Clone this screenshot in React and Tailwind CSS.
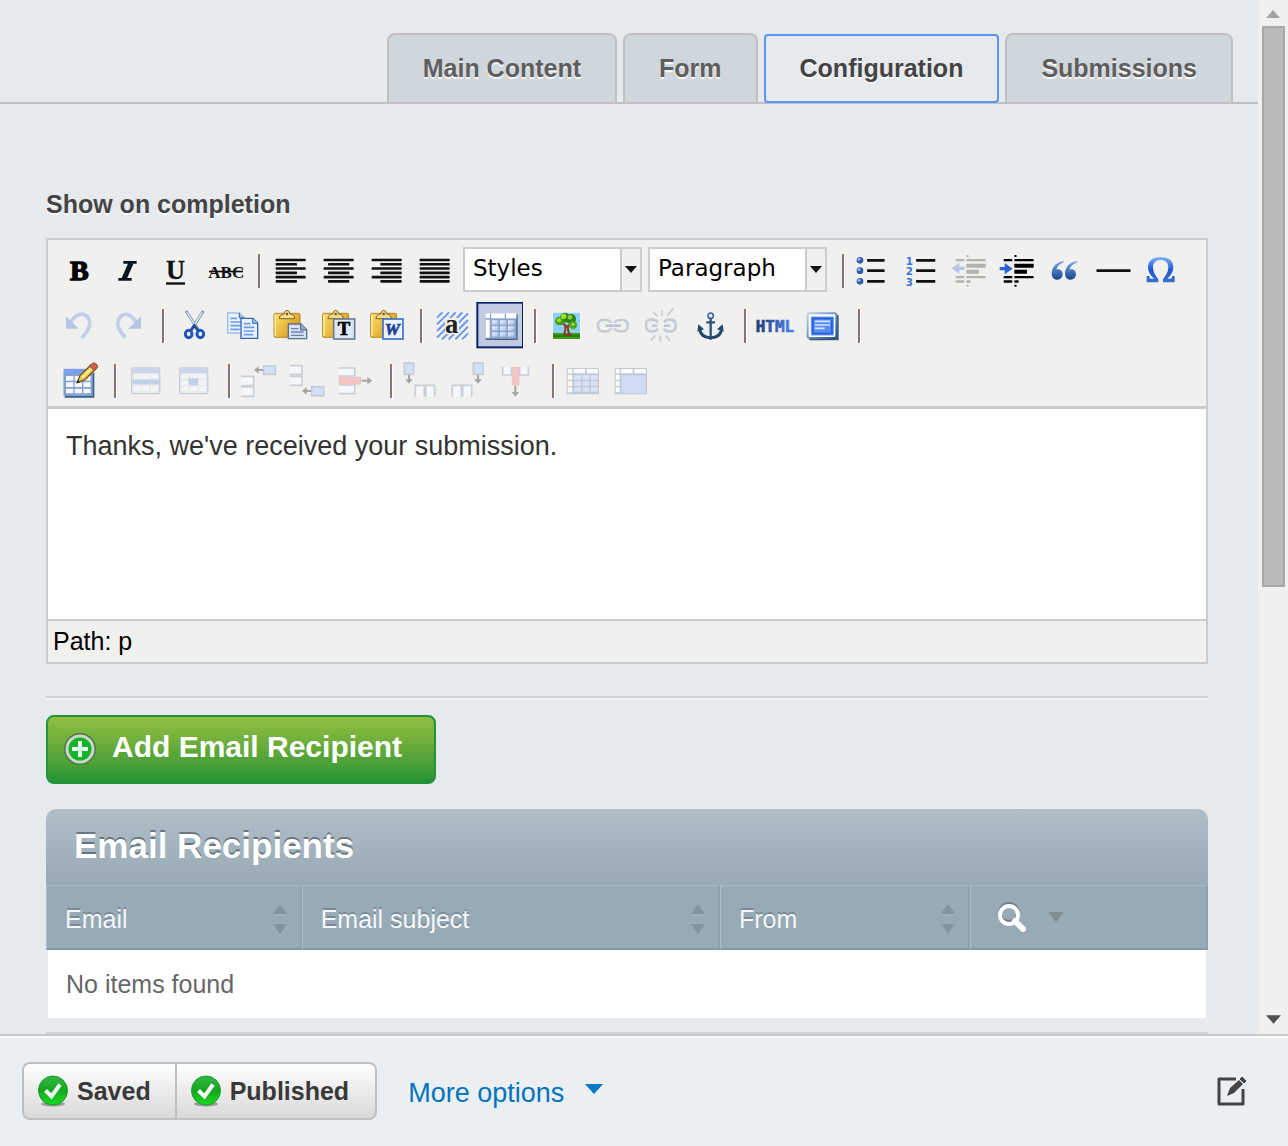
import React from "react";

const hint = "[text-shadow:0_2px_1px_rgba(255,255,255,0.85)]";

function Tool({ label, view, active, disabled, children }) {
  return (
    <button
      type="button"
      aria-label={label}
      title={label}
      disabled={disabled}
      className="flex h-12 w-12 shrink-0 items-center justify-center"
    >
      <svg viewBox={view} className="h-12 w-12" fill="none">
        {active && <rect x="82" y="203" width="137" height="134" fill="#c2cbe0" stroke="#0a246a" strokeWidth="6" />}
        {children}
      </svg>
    </button>
  );
}

function Sep() {
  return (
    <span className="flex h-12 w-[18px] shrink-0 items-center justify-end pr-[5px]">
      <span className="h-[34px] w-[2px] bg-[repeating-linear-gradient(#8f7773_0_5px,#75758c_5px_8px)] shadow-[1px_1px_1px_#fff]" />
    </span>
  );
}

function Picker({ label, value }) {
  return (
    <span className="relative h-[45px] w-[179px] shrink-0">
      <select
        aria-label={label}
        defaultValue={value}
        className="h-full w-full appearance-none border-2 border-[#ccc] bg-white pb-[2px] pl-2 font-['DejaVu_Sans',sans-serif] text-[23px] leading-[38px] text-black outline-none"
      >
        <option>{value}</option>
      </select>
      <span className="pointer-events-none absolute inset-y-[2px] right-[2px] flex w-[20px] items-center justify-center border-l-2 border-[#ccc] bg-[#f0f0ee]">
        <svg viewBox="0 0 12 7" className="h-[7px] w-3">
          <path d="M0 0h12L6 7z" fill="#111" />
        </svg>
      </span>
    </span>
  );
}

function Bars({ rows, color = "#111", h = 7 }) {
  return rows.map(([x, y, w], i) => <rect key={i} x={x} y={y} width={w} height={h} rx="2" fill={color} />);
}

function Clipboard({ x }) {
  return (
    <g transform={`translate(${x} 0)`}>
      <rect x="2" y="235" width="78" height="72" rx="4" fill="url(#board)" stroke="#b08a2c" strokeWidth="3" />
      <path d="M6 240v62" stroke="#fff0a8" strokeWidth="4" />
      <path d="M18 251q0-12 14-14 2-11 9-11t9 11q14 2 14 14z" fill="#f3dc86" stroke="#80662a" strokeWidth="3" />
      <circle cx="41" cy="237" r="4" fill="#6e5a2a" />
    </g>
  );
}

function Grid({ x, y, w, h, faded, children }) {
  return (
    <g opacity={faded ? 0.35 : 1}>
      <rect x={x} y={y} width={w} height={h} rx="3" fill="#dbe6fa" stroke="#8095b5" strokeWidth="4" />
      <rect x={x + 2} y={y + 2} width={w - 4} height="14" fill="#86a5e3" />
      {children}
    </g>
  );
}

const cells = (x, y, cols, rows, w, h, gx, gy, fill) => {
  const out = [];
  for (let r = 0; r < rows; r++)
    for (let c = 0; c < cols; c++)
      out.push(<rect key={r + "-" + c} x={x + c * gx} y={y + r * gy} width={w} height={h} rx="1" fill={fill} />);
  return out;
};

function Defs() {
  return (
    <svg className="absolute h-0 w-0" aria-hidden="true">
      <defs>
        <linearGradient id="board" x1="0" y1="0" x2="1" y2="0.6">
          <stop offset="0" stopColor="#ffdf6b" />
          <stop offset="1" stopColor="#d49a1c" />
        </linearGradient>
        <linearGradient id="blue" x1="0" y1="0" x2="0" y2="1">
          <stop offset="0" stopColor="#6fa8e8" />
          <stop offset="1" stopColor="#1f4690" />
        </linearGradient>
        <linearGradient id="omega" x1="0" y1="0" x2="0" y2="1">
          <stop offset="0" stopColor="#7fb2f7" />
          <stop offset="0.5" stopColor="#1e57d0" />
          <stop offset="1" stopColor="#3a6fd8" />
        </linearGradient>
        <linearGradient id="html" x1="0" y1="0" x2="1" y2="0">
          <stop offset="0" stopColor="#1c3c78" />
          <stop offset="1" stopColor="#4a86f0" />
        </linearGradient>
        <linearGradient id="cell" x1="0" y1="0" x2="1" y2="1">
          <stop offset="0" stopColor="#f4f8ff" />
          <stop offset="1" stopColor="#9db8ee" />
        </linearGradient>
        <linearGradient id="tick" x1="0" y1="0" x2="0" y2="1">
          <stop offset="0" stopColor="#2fb944" />
          <stop offset="0.5" stopColor="#17a51f" />
          <stop offset="1" stopColor="#14e01c" />
        </linearGradient>
        <linearGradient id="edge" x1="0" y1="0" x2="1" y2="1">
          <stop offset="0" stopColor="#b9d3ee" />
          <stop offset="1" stopColor="#24508a" />
        </linearGradient>
      </defs>
    </svg>
  );
}

const serif = "Liberation Serif, serif";

function AlignTool({ label, x, kind }) {
  const rows = [0, 1, 2, 3, 4, 5].map((i) => {
    const y = 71 + i * 12.8;
    const short = i % 2 === 1 && kind !== "justify";
    const left = x + 32;
    if (!short) return [left, y, 90];
    return [kind === "left" ? left : kind === "center" ? left + 13 : left + 26, y, 64];
  });
  return (
    <Tool label={label} view={`${x} 36 144 144`}>
      <Bars rows={rows} h={8} />
    </Tool>
  );
}

function DentBars({ x, color }) {
  return (
    <g fill={color}>
      <rect x={x + 4} y="60" width="7" height="6" rx="2" />
      <rect x={x - 28} y="72" width="26" height="7" rx="2" />
      <rect x={x + 4} y="72" width="58" height="7" rx="2" />
      <rect x={x + 4} y="86" width="58" height="12" rx="2" />
      <rect x={x + 4} y="104" width="38" height="12" rx="2" />
      <rect x={x - 28} y="123" width="26" height="7" rx="2" />
      <rect x={x + 4} y="123" width="58" height="7" rx="2" />
      <rect x={x - 28} y="136" width="26" height="7" rx="2" />
      <rect x={x + 4} y="136" width="13" height="7" rx="2" />
      <rect x={x + 4} y="149" width="7" height="6" rx="2" />
    </g>
  );
}

function RowOne() {
  return (
    <div className="flex h-[50px] items-center">
      <Tool label="Bold" view="45 36 144 144">
        <text x="90" y="135" fontFamily={serif} fontWeight="700" fontSize="84" fill="#000" stroke="#000" strokeWidth="4">B</text>
      </Tool>
      <Tool label="Italic" view="189 36 144 144">
        <path d="M250 82h40M235 133h40M274 82l-22 51" stroke="#0c1420" strokeWidth="8" />
        <path d="M273 84l-21 48" stroke="#0c1420" strokeWidth="15" />
      </Tool>
      <Tool label="Underline" view="333 36 144 144">
        <text x="378" y="132" fontFamily={serif} fontWeight="700" fontSize="79" fill="#111" stroke="#111" strokeWidth="1">U</text>
        <rect x="378" y="142" width="57" height="7" fill="#111" />
      </Tool>
      <Tool label="Strikethrough" view="477 36 144 144">
        <text x="505" y="128" fontFamily={serif} fontWeight="700" fontSize="51" fill="#111">ABC</text>
        <rect x="507" y="107" width="102" height="5" fill="#111" />
      </Tool>
      <Sep />
      <AlignTool label="Align left" x={675} kind="left" />
      <AlignTool label="Align center" x={819} kind="center" />
      <AlignTool label="Align right" x={963} kind="right" />
      <AlignTool label="Align full" x={1107} kind="justify" />
      <div className="mr-1 mb-1 ml-[6px] flex gap-[6px]">
        <Picker label="Styles" value="Styles" />
        <Picker label="Format" value="Paragraph" />
      </div>
      <Sep />
      <Tool label="Unordered list" view="57 36 144 144">
        {[76, 107, 139].map((y) => (
          <g key={y}>
            <circle cx="90" cy={y} r="10" fill="#2d5cab" />
            <circle cx="87" cy={y - 3} r="4" fill="#a4c2ee" />
            <rect x="111" y={y - 4} width="53" height="8" rx="2" fill="#111" />
          </g>
        ))}
      </Tool>
      <Tool label="Ordered list" view="201 36 144 144">
        {[76, 107, 139].map((y, i) => (
          <g key={y}>
            <text x="227" y={y + 13} fontFamily="DejaVu Sans, sans-serif" fontWeight="700" fontSize="31" fill="#3f73dc">{i + 1}</text>
            <rect x="258" y={y - 4} width="58" height="8" rx="2" fill="#111" />
          </g>
        ))}
      </Tool>
      <Tool label="Outdent" view="345 36 144 144" disabled>
        <DentBars x={405} color="#b2b2b0" />
        <path d="M364 100l24-16v11h16v10h-16v11z" fill="#b5c5ea" />
      </Tool>
      <Tool label="Indent" view="489 36 144 144">
        <DentBars x={549} color="#000" />
        <path d="M548 101l-24-17v12h-15v10h15v12z" fill="#2b62d3" />
      </Tool>
      <Tool label="Blockquote" view="633 36 144 144">
        {[0, 40].map((dx) => (
          <path
            key={dx}
            transform={`translate(${dx} 0)`}
            d="M700 78c-22 4-35 19-35 38 0 11 7 18 17 18 9 0 16-7 16-16s-6-15-14-15c-2 0-4 0-5 1 2-10 9-17 22-22z"
            fill="url(#blue)"
          />
        ))}
      </Tool>
      <Tool label="Horizontal rule" view="777 36 144 144">
        <rect x="799" y="103" width="103" height="8" rx="3" fill="#111" />
      </Tool>
      <Tool label="Special character" view="921 36 144 144">
        <path
          d="M950 142v-19h7l3 8h12c-13-12-18-23-18-35 0-19 16-30 38-30s38 11 38 30c0 12-5 23-18 35h12l3-8h7v19h-35v-9c11-14 16-24 16-36 0-14-8-22-23-22s-23 8-23 22c0 12 5 22 16 36v9z"
          fill="url(#omega)"
        />
      </Tool>
    </div>
  );
}

function RowTwo() {
  return (
    <div className="flex h-[50px] items-center">
      <Tool label="Undo" view="45 201 144 144" disabled>
        <path d="M92 262c14-25 36-30 49-18 16 16 7 42-16 65" stroke="#c0cfec" strokeWidth="11" />
        <path d="M78 244v37h38z" fill="#b5c5e6" />
      </Tool>
      <Tool label="Redo" view="189 201 144 144" disabled>
        <path d="M288 262c-14-25-33-30-46-18-16 16-8 42 14 63" stroke="#c0cfec" strokeWidth="11" />
        <path d="M303 244v37h-38z" fill="#b5c5e6" />
      </Tool>
      <Sep />
      <Tool label="Cut" view="387 201 144 144">
        <path d="M438 228l38 58M490 228l-37 58" stroke="#8296ae" strokeWidth="9" />
        <path d="M441 232l28 44M487 232l-27 43" stroke="#e4ecf5" strokeWidth="4" />
        <ellipse cx="446" cy="297" rx="10" ry="11" stroke="#1f56b8" strokeWidth="9" />
        <ellipse cx="481" cy="297" rx="10" ry="11" stroke="#1f56b8" strokeWidth="9" />
        <path d="M453 286l10-14 10 14" stroke="#1f4ba0" strokeWidth="8" />
      </Tool>
      <Tool label="Copy" view="531 201 144 144">
        {[[561, 232], [601, 248]].map(([x, y], i) => (
          <g key={x} transform={`translate(${x} ${y})`}>
            <path d="M2 2h36l14 14v46H2z" fill="#eaf2ff" stroke={i ? "#3566b8" : "#9dbce6"} strokeWidth="4" />
            <path d="M37 2v15h15" fill="#a5c0ee" stroke="#3566b8" strokeWidth="3" />
            <path d="M10 18h20M10 29h32M10 40h32M10 51h28" stroke="#6f9be0" strokeWidth="5" />
          </g>
        ))}
      </Tool>
      <Tool label="Paste" view="675 201 144 144">
        <Clipboard x={700} />
        <path d="M745 267h38l17 17v27h-55z" fill="#d6e1f2" stroke="#5f7090" strokeWidth="4" />
        <path d="M782 267v18h18" fill="#9fb1cc" stroke="#4b5c78" strokeWidth="3" />
        <path d="M753 281h22M753 291h38M753 301h38" stroke="#6d86ad" strokeWidth="4" />
      </Tool>
      <Tool label="Paste as plain text" view="819 201 144 144">
        <Clipboard x={846} />
        <rect x="881" y="252" width="63" height="60" fill="#dce7f7" stroke="#6d7b94" strokeWidth="5" />
        <text x="893" y="301" fontFamily={serif} fontWeight="700" fontSize="56" fill="#000" stroke="#000" strokeWidth="2">T</text>
      </Tool>
      <Tool label="Paste from Word" view="963 201 144 144">
        <Clipboard x={990} />
        <rect x="1029" y="252" width="60" height="60" fill="#eaf2ff" stroke="#3d72cc" strokeWidth="5" />
        <text x="1034" y="300" fontFamily={serif} fontWeight="700" fontStyle="italic" fontSize="51" fill="#1b3f94" stroke="#1b3f94" strokeWidth="2">W</text>
      </Tool>
      <Sep />
      <Tool label="Visual characters" view="-69 201 144 144">
        <path
          d="M-39 248l16-16M-39 268l36-36M-39 288l56-56M-39 308l76-76M-24 313l78-78M-4 313l58-58M16 313l38-38M36 313l18-18"
          stroke="#6a97ec"
          strokeWidth="6"
        />
        <rect x="-15" y="248" width="42" height="50" rx="8" fill="#f0f0ee" />
        <text x="-15" y="293" fontFamily={serif} fontWeight="700" fontSize="80" fill="#222">a</text>
      </Tool>
      <Tool label="Visual aid" view="75 201 144 144" active>
        <rect x="106" y="236" width="94" height="76" rx="3" fill="#8ea4c8" />
        <path d="M107 313h94v-75" stroke="#46628f" strokeWidth="4" />
        <rect x="106" y="235" width="14" height="14" fill="#fff" />
        <rect x="124" y="235" width="40" height="15" fill="#fff" />
        <rect x="168" y="235" width="31" height="15" fill="#fff" />
        <rect x="107" y="254" width="12" height="54" fill="#fff" />
        {cells(126, 256, 3, 3, 19, 13, 24, 18, "url(#cell)")}
      </Tool>
      <Sep />
      <Tool label="Insert image" view="273 201 144 144">
        <rect x="307" y="230" width="84" height="84" fill="#fff" />
        <rect x="309" y="233" width="81" height="64" fill="#8fd0fa" />
        <rect x="309" y="294" width="81" height="18" fill="#3d9c12" />
        <path d="M309 303h81" stroke="#1f6f08" strokeWidth="4" />
        <path d="M341 300q8-16 4-30l-14-8M348 276l16-10M346 300h14q-8-12-6-30" stroke="#8b3a1c" strokeWidth="6" />
        <circle cx="345" cy="248" r="15" fill="#2f8a12" />
        <circle cx="328" cy="258" r="13" fill="#3fa016" />
        <circle cx="363" cy="252" r="15" fill="#2c7f10" />
        <circle cx="369" cy="270" r="12" fill="#47a81a" />
        <circle cx="341" cy="244" r="8" fill="#a6dc34" />
        <circle cx="360" cy="247" r="7" fill="#94d02a" />
        <circle cx="327" cy="256" r="6" fill="#a6dc34" />
        <circle cx="369" cy="268" r="5" fill="#a4d832" />
      </Tool>
      <Tool label="Insert link" view="417 201 144 144" disabled>
        <rect x="444" y="255" width="40" height="34" rx="15" stroke="#c6cbd4" strokeWidth="8" />
        <rect x="493" y="255" width="40" height="34" rx="15" stroke="#c6cbd4" strokeWidth="8" />
        <path d="M466 272h46" stroke="#f0f0ee" strokeWidth="16" />
        <path d="M466 272h46" stroke="#bac2d0" strokeWidth="8" />
      </Tool>
      <Tool label="Remove link" view="561 201 144 144" disabled>
        <path d="M623 262q-5-8-15-8h-4q-16 0-16 18t16 17h6q9 0 13-8M642 262q5-8 15-8h4q16 0 16 18t-16 17h-6q-9 0-13-8" stroke="#c6cbd4" strokeWidth="8" />
        <path d="M606 272h17M642 272h18" stroke="#bac2d0" strokeWidth="7" />
        <path d="M636 244v-18M651 242l20-22M623 244l-13-12M631 302v18M647 301l13 16M616 301l-14 16" stroke="#c6cbd4" strokeWidth="5" />
      </Tool>
      <Tool label="Anchor" view="705 201 144 144">
        <circle cx="782" cy="242" r="8" stroke="#3c6496" strokeWidth="5" />
        <path d="M782 251v54M769 262h26" stroke="#2b527f" strokeWidth="7" />
        <path d="M749 283q4 25 33 25t33-25" stroke="#23456f" strokeWidth="9" />
        <path d="M742 290l3-22 17 15zM821 290l-3-22-17 15z" fill="#23456f" />
        <path d="M774 308h16l-8 8z" fill="#23456f" />
      </Tool>
      <Sep />
      <Tool label="Edit HTML source" view="903 201 144 144">
        <text x="917" y="290" fontFamily="DejaVu Sans Mono, monospace" fontWeight="700" fontSize="48" fill="url(#html)" stroke="url(#html)" strokeWidth="2">HTML</text>
      </Tool>
      <Tool label="Fullscreen" view="1047 201 144 144">
        <path d="M1078 313h85V240" stroke="#35577f" strokeWidth="6" />
        <rect x="1073" y="235" width="86" height="74" rx="6" fill="#fff" stroke="url(#edge)" strokeWidth="6" />
        <rect x="1084" y="246" width="66" height="54" fill="#2561dd" stroke="#6d9cf0" strokeWidth="3" />
        <rect x="1091" y="253" width="52" height="40" fill="#5b8df0" />
        <path d="M1094 259h46M1094 270h46M1094 280h30" stroke="#d3e2ff" strokeWidth="5" />
      </Tool>
      <Sep />
    </div>
  );
}

function RowThree() {
  const box = { fill: "#f6f7f8", stroke: "#c8cfd6", strokeWidth: 5 };
  const blue = { fill: "#d3e0f8", stroke: "#c3ccd8", strokeWidth: 5 };
  const red = { fill: "#f6c2c2", stroke: "#dccaca", strokeWidth: 3 };
  return (
    <div className="flex h-[50px] items-center">
      <Tool label="Insert table" view="45 366 144 144">
        <path d="M74 485h86v-72" stroke="#355e94" strokeWidth="6" />
        <rect x="72" y="403" width="84" height="78" fill="#8aa2c9" stroke="#7f9ccc" strokeWidth="3" />
        <rect x="72" y="402" width="84" height="17" fill="#7ba1ee" />
        {cells(78, 423, 3, 3, 22, 14, 26, 19, "#f4f8ff")}
        <path d="M112 443l8-22 33-31 14 12-32 32z" fill="#ecc94e" stroke="#6d5720" strokeWidth="4" />
        <path d="M126 428l30-29" stroke="#fff2a8" strokeWidth="5" />
        <path d="M149 393l8-8q5-3 10 1l4 4q4 5 0 9l-8 8z" fill="#cf6052" stroke="#7e463a" strokeWidth="3" />
        <path d="M110 445l3-10 8 7z" fill="#222" />
      </Tool>
      <Sep />
      <Tool label="Table row properties" view="243 366 144 144" disabled>
        <Grid x={275} y={399} w={84} h={77} faded>
          {cells(281, 418, 3, 1, 20, 11, 26, 18, "#fff")}
          <rect x="277" y="434" width="80" height="14" fill="#6f97e4" />
          {cells(281, 453, 3, 1, 20, 15, 26, 18, "#fff")}
        </Grid>
      </Tool>
      <Tool label="Table cell properties" view="387 366 144 144" disabled>
        <Grid x={419} y={399} w={84} h={77} faded>
          {cells(425, 418, 3, 3, 20, 12, 26, 19, "#fff")}
          <rect x="446" y="430" width="28" height="21" fill="#6f97e4" />
        </Grid>
      </Tool>
      <Sep />
      <Tool label="Insert row before" view="585 366 144 144" disabled>
        <path d="M604 424h37v28h-37M604 456h37v28h-37" {...box} />
        <rect x="671" y="393" width="35" height="25" {...blue} />
        <path d="M669 405h-20" stroke="#a5a5a5" strokeWidth="6" />
        <path d="M642 405l14-11v22z" fill="#a5a5a5" />
      </Tool>
      <Tool label="Insert row after" view="729 366 144 144" disabled>
        <path d="M749 392h37v26h-37M749 424h37v27h-37" {...box} />
        <rect x="815" y="455" width="36" height="27" {...blue} />
        <path d="M813 468h-20" stroke="#a5a5a5" strokeWidth="6" />
        <path d="M786 468l14-11v22z" fill="#a5a5a5" />
      </Tool>
      <Tool label="Delete row" view="873 366 144 144" disabled>
        <path d="M896 399h48v24h-48M896 450h48v26h-48" {...box} />
        <rect x="897" y="427" width="65" height="20" {...red} />
        <path d="M965 437h22" stroke="#a5a5a5" strokeWidth="6" />
        <path d="M997 437l-15-11v22z" fill="#a5a5a5" />
      </Tool>
      <Sep />
      <Tool label="Insert column before" view="1071 366 144 144" disabled>
        <rect x="1093" y="384" width="28" height="34" {...blue} />
        <path d="M1107 420v15" stroke="#a5a5a5" strokeWidth="6" />
        <path d="M1107 446l-11-13h22z" fill="#a5a5a5" />
        <path d="M1126 485v-34h27v34M1157 485v-34h27v34" {...box} />
      </Tool>
      <Tool label="Insert column after" view="-15 366 144 144" disabled>
        <rect x="70" y="384" width="29" height="34" {...blue} />
        <path d="M84 420v15" stroke="#a5a5a5" strokeWidth="6" />
        <path d="M84 446l-11-13h22z" fill="#a5a5a5" />
        <path d="M7 485v-34h27v34M38 485v-34h27v34" {...box} />
      </Tool>
      <Tool label="Delete column" view="129 366 144 144" disabled>
        <path d="M158 396v24h26v-24M209 396v24h26v-24" {...box} />
        <path d="M187 396v54h20v-54" {...red} />
        <path d="M196 452v22" stroke="#a5a5a5" strokeWidth="6" />
        <path d="M196 485l-11-14h22z" fill="#a5a5a5" />
      </Tool>
      <Sep />
      <Tool label="Split merged cells" view="327 366 144 144" disabled>
        <rect x="350" y="399" width="97" height="79" rx="2" fill="#c3cad6" />
        {cells(353, 402, 1, 1, 14, 13, 1, 1, "#fbfbfb")}
        {cells(371, 402, 2, 1, 34, 13, 39, 1, "#fbfbfb")}
        {cells(353, 419, 1, 3, 14, 15, 1, 19, "#fbfbfb")}
        {cells(373, 421, 3, 3, 20, 13, 25, 18, "#d9e4f8")}
      </Tool>
      <Tool label="Merge cells" view="471 366 144 144" disabled>
        <rect x="494" y="399" width="97" height="79" rx="2" fill="#c3cad6" />
        {cells(497, 402, 1, 1, 12, 13, 1, 1, "#fbfbfb")}
        {cells(513, 402, 2, 1, 35, 13, 40, 1, "#fbfbfb")}
        {cells(497, 419, 1, 3, 12, 15, 1, 19, "#fbfbfb")}
        <rect x="515" y="421" width="72" height="53" fill="#cfdcf6" />
      </Tool>
    </div>
  );
}

function Tab({ children }) {
  return (
    <button
      type="button"
      role="tab"
      aria-selected="false"
      className={`h-[69px] rounded-t-lg border-2 border-b-0 border-[#c0c0c2] bg-[#cfd7dd] px-[34px] pb-[2px] text-[25px] leading-[30px] font-bold text-[#5e5e5e] ${hint}`}
    >
      {children}
    </button>
  );
}

function Sort() {
  return (
    <svg viewBox="0 0 16 30" className="h-[30px] w-4 shrink-0" aria-hidden="true">
      <path d="M1 11h14M1 20h14" stroke="#a3b3bd" strokeWidth="1" />
      <path d="M8 0l7 10H1zM8 30l7-10H1z" fill="#8294a0" />
    </svg>
  );
}

const cellText = "[text-shadow:0_-2px_0_rgba(80,100,115,0.45)]";

function Head({ children, width }) {
  return (
    <th className={`h-[65px] border-t border-r-2 border-b-2 border-l border-t-[#a9b8c2] border-r-[#8fa1ae] border-b-[#8297a5] border-l-[#b0bec8] p-0 pt-[3px] pr-[12px] pl-[18px] text-left font-normal ${width}`}>
      <div className="flex items-center justify-between">
        <span className={`text-[25px] leading-[30px] text-[#f5f8fa] ${cellText}`}>{children}</span>
        <Sort />
      </div>
    </th>
  );
}

function Tick() {
  return (
    <svg viewBox="0 0 32 32" className="h-8 w-8 shrink-0" aria-hidden="true">
      <ellipse cx="16" cy="29" rx="12" ry="2.5" fill="#9a9a9a" />
      <circle cx="16" cy="15.5" r="14.5" fill="url(#tick)" stroke="#1b9a2c" strokeWidth="1" />
      <path d="M8.5 15.5l6 6 8.500-12" fill="none" stroke="#f4f4f4" strokeWidth="4" />
    </svg>
  );
}

export default function App() {
  return (
    <div className="flex h-screen flex-col overflow-hidden bg-[#e6eaed] font-['Liberation_Sans',Arial,sans-serif]">
      <Defs />
      <div className="flex min-h-0 flex-1">
        <div className="min-w-0 flex-1 overflow-hidden">
          <div role="tablist" className="flex items-start justify-end gap-[6px] border-b-2 border-[#c0c0c2] pt-[33px] pr-[25px]">
            <Tab>Main Content</Tab>
            <Tab>Form</Tab>
            <button
              type="button"
              role="tab"
              aria-selected="true"
              className={`relative z-10 mt-px -mb-px h-[69px] rounded-[4px] border-2 border-[#5a96fa] bg-[#e6eaed] px-[34px] pb-[2px] text-[25px] leading-[30px] font-bold text-[#444] outline-none ${hint}`}
            >
              Configuration
            </button>
            <Tab>Submissions</Tab>
          </div>

          <main className="pt-[85px] pr-[50px] pl-[46px]">
            <label htmlFor="completion" className={`block text-[25px] leading-[30px] font-bold text-[#444] ${hint}`}>
              Show on completion
            </label>

            <section className="mt-[19px] border-2 border-[#ccc] bg-[#f0f0ee]">
              <div role="toolbar" aria-label="Formatting" className="flex flex-col gap-[5px] pt-[6px] pl-[7px]">
                <RowOne />
                <RowTwo />
                <RowThree />
              </div>
              <textarea
                id="completion"
                defaultValue="Thanks, we've received your submission."
                className="block h-[215px] w-full resize-none border-t-[3px] border-b-2 border-[#ccc] bg-white px-[18px] pt-[21px] text-[27px] leading-8 text-[#333] outline-none"
              />
              <div className="px-[5px] pt-[5px] pb-[6px] text-[25px] leading-[30px] text-black">Path: p</div>
            </section>

            <hr className="mt-8 h-1 border-t-2 border-b-2 border-t-[#cfd2d4] border-b-[#f0f2f3]" />

            <button
              type="button"
              className="mt-[15px] flex h-[69px] items-center gap-[15px] rounded-lg border-2 border-[#21933a] bg-linear-to-b from-[#92bf41] to-[#1f9433] pr-[32px] pb-[6px] pl-[15px] text-[30px] leading-[36px] font-bold text-white"
            >
              <svg viewBox="0 0 34 34" className="mt-1 h-[34px] w-[34px]" aria-hidden="true">
                <circle cx="17" cy="17" r="16" fill="#4b7a3c" />
                <circle cx="17" cy="17" r="13" fill="#12b428" stroke="#cdd4cd" strokeWidth="3" />
                <path d="M17 9v16M9 17h16" stroke="#eef6ee" strokeWidth="4" />
              </svg>
              Add Email Recipient
            </button>

            <section className="mt-[25px]">
              <h2 className="rounded-t-[10px] bg-linear-to-b from-[#b0bec7] to-[#98aab6] px-7 pt-[17px] pb-[19px] text-[35px] leading-[40px] font-bold text-white [text-shadow:0_-2px_0_rgba(60,75,85,0.6)]">
                Email Recipients
              </h2>
              <table className="w-full table-fixed border-separate border-spacing-0">
                <thead className="bg-[#98aab6]">
                  <tr>
                    <Head width="w-[22%]">Email</Head>
                    <Head width="w-[36%]">Email subject</Head>
                    <Head width="w-[250px]">From</Head>
                    <th className="h-[65px] border-t border-r-2 border-b-2 border-l border-t-[#a9b8c2] border-r-[#8fa1ae] border-b-[#8297a5] border-l-[#b0bec8] p-0 pl-[25px]">
                      <button type="button" aria-label="Filter" className="flex items-center gap-[22px]">
                        <svg viewBox="0 0 30 30" className="h-[30px] w-[30px]" fill="none">
                          <circle cx="13" cy="11" r="9" stroke="#6d808c" strokeWidth="4" />
                          <circle cx="13" cy="13" r="9" stroke="#fff" strokeWidth="4" />
                          <path d="M19 19l8 8" stroke="#fff" strokeWidth="6" strokeLinecap="round" />
                        </svg>
                        <svg viewBox="0 0 16 10" className="h-[10px] w-4">
                          <path d="M0 0h16L8 10z" fill="#7f8d95" />
                        </svg>
                      </button>
                    </th>
                  </tr>
                </thead>
                <tbody>
                  <tr>
                    <td colSpan={4} className="h-[68px] border-x-2 border-[#e6eaed] bg-white p-0 pl-[18px] text-[25px] leading-[30px] text-[#666]">
                      No items found
                    </td>
                  </tr>
                </tbody>
              </table>
            </section>
            <hr className="mt-[14px] border-t-2 border-[#d0d3d5]" />
          </main>
        </div>

        <div className="flex w-[30px] shrink-0 flex-col items-center bg-[#f0f0f0] pt-[10px] pb-[10px]" aria-hidden="true">
          <svg viewBox="0 0 14 8" className="h-2 w-[14px] shrink-0">
            <path d="M0 8h14L7 0z" fill="#a3a3a3" />
          </svg>
          <div className="mt-2 w-[23px] flex-[13] border-2 border-[#a8a8a8] bg-[#bababa]" />
          <div className="flex-[10]" />
          <svg viewBox="0 0 14 8" className="h-[9px] w-[15px] shrink-0">
            <path d="M0 0h14L7 8z" fill="#505050" />
          </svg>
        </div>
      </div>

      <footer className="flex h-28 shrink-0 items-center border-t-2 border-[#c8c9cb] bg-[#ebeff1] px-[22px] shadow-[inset_0_2px_0_#f8fafa]">
        <div className="flex h-[58px] rounded-lg border-2 border-[#c0c0c2] bg-linear-to-b from-white to-[#d9d9d9] text-[25px] leading-[30px] font-bold text-[#393939]">
          <button type="button" className="flex items-center gap-2 pr-6 pl-[13px]">
            <Tick />
            Saved
          </button>
          <button type="button" className="flex items-center gap-2 border-l-2 border-[#c0c0c2] pr-[26px] pl-[13px]">
            <Tick />
            Published
          </button>
        </div>
        <button type="button" className="ml-[31px] flex items-center gap-[21px] pt-1 text-[27px] leading-8 text-[#0073c1]">
          More options
          <svg viewBox="0 0 18 10" className="mb-2 h-[10px] w-[18px]" aria-hidden="true">
            <path d="M0 0h18L9 10z" fill="#0079c8" />
          </svg>
        </button>
        <button type="button" aria-label="Edit mode" className="mr-[18px] ml-auto">
          <svg viewBox="0 0 32 32" className="h-8 w-8" fill="none">
            <path d="M20 4H3v25h24V14" stroke="#444" strokeWidth="3" strokeLinejoin="round" />
            <path d="M11 21l3-8 9-8 4 4-9 9z" fill="#444" />
            <path d="M24 4l2-2 4 4-2 2z" fill="#444" stroke="#444" strokeWidth="1" />
          </svg>
        </button>
      </footer>
    </div>
  );
}
